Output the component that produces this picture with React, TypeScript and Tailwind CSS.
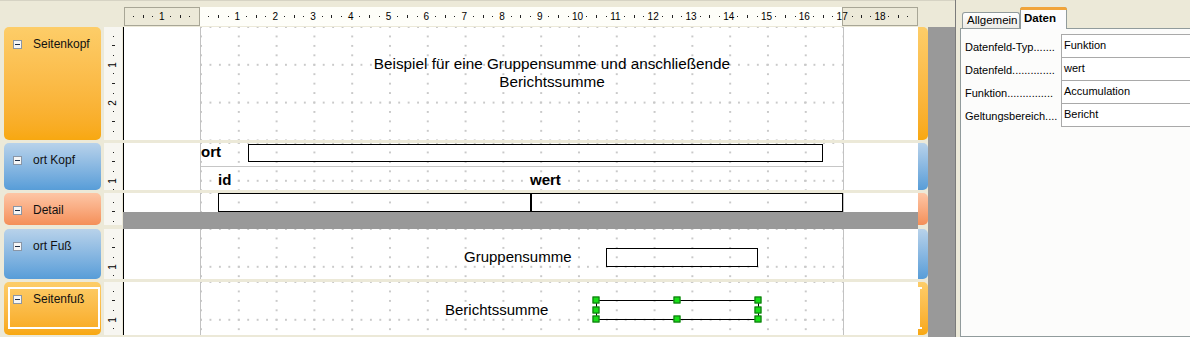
import React from "react";
import clsx from "clsx";

type BandColor = "orange" | "blue" | "salmon";

const gradients: Record<BandColor, string> = {
  orange: "bg-linear-to-b from-[#fdcd68] to-[#f8a80f]",
  blue: "bg-linear-to-b from-[#b8d2ea] to-[#579dd8]",
  salmon: "bg-linear-to-b from-[#fdc6a6] to-[#f48f58]",
};

const grid =
  "bg-white bg-[image:radial-gradient(circle,#c9c9c9_0.7px,transparent_1.1px),radial-gradient(circle,#c9c9c9_0.7px,transparent_1.1px)] bg-[size:37.8px_9.45px,9.45px_37.8px] bg-[position:-18.9px_-4.725px,-4.725px_-18.9px]";

const HorizontalRuler = () => {
  const cells = Array.from({ length: 21 }, (_, i) => i);
  return (
    <div className="flex h-[27px] items-start border-t border-[#d6d3c4] pl-[124px] pt-[6px]">
      <div className="flex h-[19px]">
        {cells.map((i) => {
          const margin = i < 2 || i > 18;
          const label = i === 0 ? "1" : i === 1 || i === 20 ? null : String(i - 1);
          return (
            <React.Fragment key={i}>
              <div
                className={clsx(
                  "flex h-full w-[37.8px] shrink-0 items-center justify-evenly",
                  margin ? "border-y border-[#a8a696] bg-[#ece9d8]" : "bg-[#fefef9]",
                  (i === 0 || i === 19) && "border-l",
                  (i === 1 || i === 20) && "border-r"
                )}
              >
                <span className="h-px w-px bg-[#222]" />
                <span className="h-[3px] w-px bg-[#222]" />
                <span className="h-px w-px bg-[#222]" />
              </div>
              {label && (
                <span className="relative z-10 flex w-0 items-center justify-center">
                  <span className="whitespace-nowrap text-[10px] leading-none text-black">{label}</span>
                </span>
              )}
            </React.Fragment>
          );
        })}
      </div>
    </div>
  );
};

const VerticalRuler = ({ h, marks }: { h: string; marks: number }) => (
  <div className={clsx("ml-[3px] flex w-[18px] shrink-0 flex-col overflow-hidden bg-[#f7f6f1]", h)}>
    {[0, 1, 2, 3].map((i) => (
      <React.Fragment key={i}>
        <div className="flex h-[37.8px] shrink-0 flex-col items-center justify-evenly">
          <span className="h-px w-px bg-[#222]" />
          <span className="h-px w-[3px] bg-[#222]" />
          <span className="h-px w-px bg-[#222]" />
        </div>
        <div className="relative z-10 flex h-0 shrink-0 items-center justify-center">
          {i < marks && <span className="-rotate-90 text-[10px] leading-none text-black">{i + 1}</span>}
        </div>
      </React.Fragment>
    ))}
  </div>
);

const MinusBox = () => (
  <span className="flex h-[9px] w-[9px] shrink-0 items-center justify-center border border-[#8a96a6] bg-[#f6f6f6]">
    <span className="h-px w-[5px] bg-[#1d2c44]" />
  </span>
);

const Band = ({
  title,
  color,
  rowH,
  labelH,
  marks,
  selected,
  detail,
  children,
}: {
  title: string;
  color: BandColor;
  rowH: string;
  labelH?: string;
  marks: number;
  selected?: boolean;
  detail?: boolean;
  children?: React.ReactNode;
}) => {
  const lh = labelH ?? rowH;
  const page = (
    <div className="flex h-full">
      <div className="w-[77px] shrink-0 border-l border-black bg-white" />
      <div className={clsx("relative w-[644px] shrink-0 border-x border-[#c2c2c2]", grid)}>{children}</div>
      <div className="w-[74px] shrink-0 bg-white" />
    </div>
  );
  return (
    <div className={clsx("flex shrink-0 items-start", rowH)}>
      <div className={clsx("relative ml-[4px] w-[97px] shrink-0 rounded-[5px]", gradients[color], lh)}>
        {selected && (
          <div className="absolute bottom-[6px] left-[4px] right-[1px] top-[5px] border-2 border-white" />
        )}
        <div className="relative flex items-center gap-[11px] pl-[9px] pt-[10px] text-[12px] leading-[14px] text-[#111]">
          <MinusBox />
          <span className="whitespace-nowrap">{title}</span>
        </div>
      </div>
      <VerticalRuler h={lh} marks={marks} />
      <div className="ml-[1px] flex h-full shrink-0 flex-col">
        {detail ? (
          <>
            <div className="h-[19px]">{page}</div>
            <div className="h-[17px] w-[795px] bg-[#999999]" />
          </>
        ) : (
          page
        )}
      </div>
      <div className={clsx("relative w-[10px] shrink-0 rounded-r-[5px]", gradients[color], lh)}>
        {selected && (
          <div className="absolute bottom-[6px] left-0 top-[5px] w-[4px] border-2 border-r-0 border-white" />
        )}
      </div>
    </div>
  );
};

const Box = ({ className }: { className: string }) => (
  <div className={clsx("absolute border border-black", className)} />
);

const Handle = ({ className }: { className: string }) => (
  <span
    className={clsx(
      "absolute h-[7px] w-[7px] -translate-x-1/2 -translate-y-1/2 border border-[#146614] bg-[#16e016]",
      className
    )}
  />
);

const props = [
  ["Datenfeld-Typ.......", "Funktion"],
  ["Datenfeld..............", "wert"],
  ["Funktion...............", "Accumulation"],
  ["Geltungsbereich....", "Bericht"],
];

const PropertyPanel = () => (
  <div className="flex w-[234px] shrink-0 flex-col overflow-hidden pl-[4px] pt-[6px]">
    <div className="flex h-[22px] items-end pl-[2px]">
      <div className="flex h-[16px] w-[58px] items-center rounded-t-[3px] border border-b-0 border-[#919b9c] bg-linear-to-b from-white to-[#ecebe6] pl-[4px] text-[11.5px]">
        Allgemein
      </div>
      <div className="relative z-10 -mb-px flex h-[22px] w-[47px] flex-col rounded-t-[3px] border border-b-0 border-[#919b9c] bg-[#fcfcfe]">
        <div className="-mx-px -mt-px h-[3px] rounded-t-[3px] bg-[#f1a43a]" />
        <span className="pl-[3px] pt-[1px] text-[11.5px] font-bold leading-[14px]">Daten</span>
      </div>
    </div>
    <div className="w-[260px] flex-1 border border-[#919b9c] bg-[#fcfcfb] pt-[5px]">
      {props.map(([k, v]) => (
        <div key={k} className="-mt-px flex h-[24px] first:mt-0">
          <div className="w-[100px] shrink-0 whitespace-nowrap pl-[4px] pt-[6px] text-[11px] leading-[14px]">
            {k}
          </div>
          <div className="flex-1 border border-[#a9a9a9] bg-white pl-[2px] pt-[3px] text-[11px] leading-[14px]">
            {v}
          </div>
        </div>
      ))}
    </div>
  </div>
);

export default function App() {
  return (
    <div className="flex h-[337px] w-[1190px] overflow-hidden bg-[#ece9d8] font-['Liberation_Sans',Arial,sans-serif] text-black">
      <div className="flex w-[955px] shrink-0 flex-col">
        <HorizontalRuler />
        <div className="flex flex-1">
          <div className="flex w-[928px] shrink-0 flex-col">
            <Band title="Seitenkopf" color="orange" rowH="h-[113px] mb-[3px]" marks={2}>
              <div className="absolute left-[90px] top-[28px] w-[522px] text-center text-[15.3px] leading-[18px]">
                Beispiel für eine Gruppensumme und anschließende
                <br />
                Berichtssumme
              </div>
            </Band>
            <Band title="ort Kopf" color="blue" rowH="h-[47px] mb-[3px]" marks={1}>
              <span className="absolute left-0 top-0 text-[15px] font-bold leading-[18px]">ort</span>
              <Box className="left-[47px] top-[1px] h-[18px] w-[575px]" />
              <div className="absolute left-0 right-0 top-[23px] h-px bg-[#c6c6c6]" />
              <span className="absolute left-[17px] top-[28px] text-[15px] font-bold leading-[18px]">id</span>
              <span className="absolute left-[329px] top-[28px] text-[15px] font-bold leading-[18px]">wert</span>
            </Band>
            <Band title="Detail" color="salmon" rowH="h-[36px]" labelH="h-[32px]" marks={0} detail>
              <Box className="left-[17px] top-0 h-[19px] w-[313px]" />
              <Box className="left-[330px] top-0 h-[19px] w-[312px]" />
            </Band>
            <Band title="ort Fuß" color="blue" rowH="h-[50px] mb-[3px]" marks={1}>
              <span className="absolute left-[263px] top-[19px] text-[15px] leading-[18px]">Gruppensumme</span>
              <Box className="left-[405px] top-[19px] h-[19px] w-[152px]" />
            </Band>
            <Band title="Seitenfuß" color="orange" rowH="h-[53px]" marks={1} selected>
              <span className="absolute left-[244px] top-[19px] text-[15px] leading-[18px]">Berichtssumme</span>
              <Box className="left-[395px] top-[18px] h-[20px] w-[163px]" />
              <Handle className="left-[395px] top-[18px]" />
              <Handle className="left-[476px] top-[18px]" />
              <Handle className="left-[557px] top-[18px]" />
              <Handle className="left-[395px] top-[28px]" />
              <Handle className="left-[557px] top-[28px]" />
              <Handle className="left-[395px] top-[37px]" />
              <Handle className="left-[476px] top-[37px]" />
              <Handle className="left-[557px] top-[37px]" />
            </Band>
          </div>
          <div className="flex-1 bg-[#999999]" />
        </div>
      </div>
      <div className="w-px shrink-0 bg-[#7b7b7b]" />
      <PropertyPanel />
    </div>
  );
}
